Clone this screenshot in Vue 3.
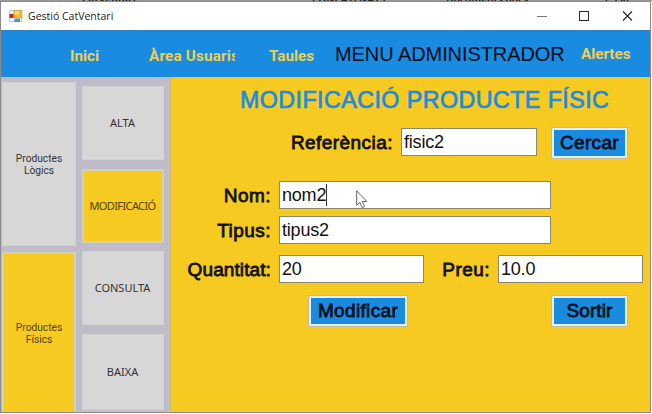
<script setup>
import { ref } from 'vue'

const menu = [
  { label: 'Inici', cls: 'inici' },
  { label: 'Àrea Usuaris', cls: 'area' },
  { label: 'Taules', cls: 'taules' }
]
const actions = [
  { label: 'ALTA' },
  { label: 'MODIFICACIÓ', active: true },
  { label: 'CONSULTA' },
  { label: 'BAIXA' }
]
const form = ref({ referencia: 'fisic2', nom: 'nom2', tipus: 'tipus2', quantitat: '20', preu: '10.0' })
</script>

<template>
  <div class="screen">
    <div class="behind"><span class="b1">CatVentari</span><span class="b2">CONCATENATS</span><span class="b3">Documents docs</span><span class="b4">1.536</span></div>
    <div class="window">
      <header class="titlebar">
        <svg class="app-icon" width="14" height="13" viewBox="0 0 14 13">
          <rect x="0.5" y="0.5" width="12" height="11" fill="#eef0f2" stroke="#c5c8cc" />
          <rect x="0.5" y="4" width="4.2" height="4" fill="#b62b2b" />
          <rect x="5" y="0.5" width="8" height="7.5" fill="#f0bd35" stroke="#c29a3b" stroke-width=".7" />
          <rect x="6" y="1.3" width="4" height="3" fill="#ffe184" />
          <rect x="5.5" y="8.7" width="5.5" height="3.3" fill="#4a8ddc" />
        </svg>
        <span class="title">Gestió CatVentari</span>
        <svg class="controls" width="110" height="12" viewBox="0 0 110 12" fill="none">
          <path d="M0 6.5H10" stroke="#777" />
          <rect x="42.5" y="1.5" width="9" height="9" stroke="#222" />
          <path d="M86 1.5L95 10.5M95 1.5L86 10.5" stroke="#222" stroke-width="1.1" />
        </svg>
      </header>
      <nav class="menubar">
        <span v-for="m in menu" :key="m.cls" class="link" :class="m.cls">{{ m.label }}</span>
        <span class="heading">MENU ADMINISTRADOR</span>
        <span class="link alertes">Alertes</span>
      </nav>
      <div class="body">
        <aside class="sidebar">
          <div class="groups">
            <div class="tile logics">Productes<br />Lògics</div>
            <div class="tile fisics active">Productes<br />Físics</div>
          </div>
          <div class="actions">
            <div v-for="a in actions" :key="a.label" class="tile" :class="{ active: a.active }"><span>{{ a.label }}</span></div>
          </div>
        </aside>
        <main class="panel">
          <h1>MODIFICACIÓ PRODUCTE FÍSIC</h1>
          <div class="row r-ref">
            <label class="l-ref">Referència:</label>
            <div class="field f-ref">{{ form.referencia }}</div>
            <button class="b-cercar">Cercar</button>
          </div>
          <div class="row r-nom">
            <label>Nom:</label>
            <div class="field wide">{{ form.nom }}<i class="caret"></i></div>
          </div>
          <div class="row r-tipus">
            <label>Tipus:</label>
            <div class="field wide">{{ form.tipus }}</div>
          </div>
          <div class="row r-qty">
            <label class="l-qty">Quantitat:</label>
            <div class="field f-qty">{{ form.quantitat }}</div>
            <label class="l-preu">Preu:</label>
            <div class="field f-preu">{{ form.preu }}</div>
          </div>
          <div class="row r-btn">
            <button class="b-mod">Modificar</button>
            <button class="b-sortir">Sortir</button>
          </div>
        </main>
      </div>
    </div>
    <svg class="pointer" width="12" height="19" viewBox="0 0 12 19">
      <path d="M.7 .8V15.3L3.8 12.4L6.1 17.6L8.6 16.5L6.3 11.5H10.8Z" fill="#fff" stroke="#555" stroke-width=".9" />
    </svg>
  </div>
</template>

<style>
html, body { overflow: hidden; background: #fff; }
</style>

<style scoped>
* { box-sizing: border-box; }
.screen { position: relative; width: 652px; height: 414px; overflow: hidden; background: #fff; font-family: "Liberation Sans", Arial, sans-serif; }
.behind { position: relative; height: 1px; background: #999; overflow: hidden; font: bold 10px/1px "Open Sans", sans-serif; color: #222; }
.behind span { position: absolute; top: -4px; line-height: 6px; }
.b1 { left: 82px; } .b2 { left: 312px; } .b3 { left: 446px; } .b4 { left: 603px; }
.window { width: 651px; height: 412px; border: 1px solid #8b8b8b; background: #f6ca20; }
.titlebar { height: 28px; background: #fff; display: flex; align-items: center; padding-left: 8px; }
.title { margin-left: 5px; font: 10.5px/14px "Open Sans", sans-serif; color: #222; width: 120px; white-space: nowrap; }
.controls { margin-left: 389px; }
.menubar { height: 47px; background: #198ce2; display: flex; align-items: flex-start; white-space: nowrap; border-top: 1px solid #3579b5; }
.link { font: bold 15.2px/20px Roboto, sans-serif; color: #edcf50; overflow: hidden; flex: none; margin-top: 15px; }
.inici { width: 79px; margin-left: 69px; }
.area { width: 86px; letter-spacing: .2px; }
.taules { width: 66px; margin-left: 34px; }
.heading { font-size: 20px; line-height: 24px; letter-spacing: -.08px; color: #020b18; width: 246px; margin-top: 11px; flex: none; }
.link.alertes { margin-top: 13px; }
.body { display: flex; height: 334px; }
.sidebar { width: 169px; background: #bdbcc8; display: flex; padding: 5px 0 0 1px; gap: 6px; flex: none; }
.tile { background: #d7d7d7; border: 1px solid #d0d4d0; color: #333; display: flex; align-items: center; justify-content: center; text-align: center; font: 10.2px/12px Roboto, sans-serif; }
.tile.active { background: #f6ca20; border: 2px solid #d3d0b8; color: #51430d; }
.groups { display: flex; flex-direction: column; gap: 6px; width: 74px; }
.groups .tile { padding-top: 2px; }
.logics { height: 164px; }
.groups .fisics { height: 159px; border-bottom: 0; }
.actions { display: flex; flex-direction: column; gap: 9px; width: 82px; padding-top: 4px; }
.actions .tile { height: 74px; padding-right: 1px; font: 11px/14px "Noto Sans", sans-serif; }
.actions .tile:nth-child(3) { margin-top: -1px; }
.actions .tile:last-child { height: 76px; }
.actions .tile.active { letter-spacing: -.6px; }
.panel { flex: 1; background: #f6ca20; border-left: 1px solid #d2bd65; }
h1 { margin: 0; padding: 10px 0 0 69px; font-size: 23.2px; line-height: 26px; letter-spacing: .48px; font-weight: normal; color: #198ce2; -webkit-text-stroke: .7px #198ce2; white-space: nowrap; }
.row { display: flex; align-items: flex-start; }
label { width: 100px; margin-right: 8px; text-align: right; font-size: 19px; line-height: 30px; letter-spacing: .45px; color: #111; -webkit-text-stroke: .8px #111; white-space: nowrap; flex: none; height: 29px; }
.l-ref { width: 222px; }
.l-qty { letter-spacing: .1px; }
.field { height: 28px; background: #fff; border: 1px solid #8b8670; font-size: 18px; line-height: 25px; letter-spacing: -.2px; padding-left: 2px; color: #111; display: flex; align-items: center; flex: none; }
.f-ref { width: 136px; }
.wide { width: 272px; }
.f-qty { width: 145px; }
.l-preu { width: 66px; }
.f-preu { width: 145px; }
.caret { width: 1px; height: 22px; background: #333; }
button { height: 32px; padding: 0; border: 1px solid #bfb9a0; box-shadow: inset 0 0 0 2px #e6eef6; background: #198ce2; font: 19px/24px "Liberation Sans", Arial, sans-serif; letter-spacing: .35px; color: #04101c; -webkit-text-stroke: .8px #04101c; flex: none; }
.b-cercar { width: 77px; margin: -1px 0 0 14px; }
.r-ref { margin-top: 15px; }
.r-nom { margin-top: 22px; }
.r-tipus { margin-top: 6px; }
.r-qty { margin-top: 10px; }
.r-btn { margin-top: 11px; padding-left: 137px; }
.b-mod { width: 100px; }
.b-sortir { width: 77px; margin-left: 143px; letter-spacing: .1px; }
.pointer { position: absolute; left: 356px; top: 190px; }
</style>
